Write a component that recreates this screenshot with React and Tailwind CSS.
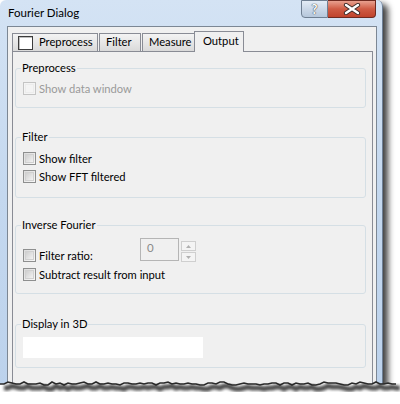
import React from 'react';

const font = "font-['Lato','Segoe_UI',sans-serif]";

// deterministic jagged edge for the torn bottom of the screenshot
const tornPoints = () => {
  const pts = [];
  let seed = 7;
  for (let x = 0; x <= 396; x += 4) {
    seed = (seed * 9301 + 49297) % 233280;
    const r = seed / 233280;
    pts.push([x, 8 + Math.round(r * 4) - (r > 0.85 ? 2 : 0)]);
  }
  return pts;
};

const CheckBox = ({ disabled }) => (
  <div
    className={`shrink-0 w-[13px] h-[13px] border ${
      disabled ? 'border-[#c4c4c4] bg-[#f4f4f4]' : 'border-[#8e8f8f] bg-gradient-to-br from-[#dcdcdc] to-[#f8f8f8]'
    } p-[1px]`}
  >
    <div className={`w-full h-full border ${disabled ? 'border-[#ececec]' : 'border-[#d0d0d0] bg-gradient-to-br from-[#cfcfcf] to-[#f2f2f2]'}`} />
  </div>
);

const CheckRow = ({ label, disabled }) => (
  <div className="flex items-center gap-[3px] h-[13px]">
    <CheckBox disabled={disabled} />
    <span className={`text-[11.2px] leading-[15px] ${disabled ? 'text-[#9a9a9a]' : 'text-black'}`}>{label}</span>
  </div>
);

const Group = ({ title, className, children }) => (
  <div className={`relative w-[351px] ml-[2px] border border-[#d5dfe5] rounded-[3px] ${className}`}>
    <span className="absolute -top-[9px] left-[5px] px-[1px] bg-[#f0f0f0] text-[11.2px] leading-[16px] text-black">
      {title}
    </span>
    {children}
  </div>
);

const Tab = ({ children, className }) => (
  <div
    className={`h-[18px] mt-[2px] flex items-center border border-b-0 border-[#898c95] bg-gradient-to-b from-[#f3f3f3] to-[#dadada] text-[11.2px] ${className}`}
  >
    {children}
  </div>
);

export default function App() {
  const pts = tornPoints();
  const line = pts.map((p, i) => `${i ? 'L' : 'M'}${p[0]} ${p[1]}`).join(' ');
  const fill = `${line} L396 30 L0 30 Z`;

  return (
    <div className={`relative w-[400px] h-[404px] bg-white overflow-hidden ${font}`}>
      {/* window frame */}
      <div className="relative w-[383px] h-[392px] rounded-t-[6px] bg-gradient-to-b from-[#d4e3f4] via-[#c4d8ef] to-[#bcd2ec] border-r border-[#6d7f95] shadow-[5px_4px_6px_rgba(0,0,0,0.75)]">
        {/* title bar */}
        <div className="h-[26px] flex items-center pl-[8px] pb-[1px]">
          <span className="text-[11.5px] text-black">Fourier Dialog</span>
        </div>
        <div className="absolute top-0 right-[6px] flex">
          <div className="w-[27px] h-[18px] border border-[#6f7f92] rounded-bl-[4px] bg-gradient-to-b from-[#e4ecf6] via-[#cbd8e8] to-[#b6c7db] flex items-center justify-center">
            <span className="text-[13px] leading-none font-bold text-white [text-shadow:0_0_1px_#333,0_0_1px_#333]">?</span>
          </div>
          <div className="w-[48px] h-[18px] border border-l-0 border-[#6f2a20] rounded-br-[4px] bg-gradient-to-b from-[#e8a08f] via-[#cf5b44] to-[#c0432c] flex items-center justify-center">
            <svg width="18" height="12" viewBox="0 0 18 12">
              <path d="M3 2 L15 10 M15 2 L3 10" stroke="#3a2a28" strokeWidth="4.2" strokeLinecap="round" />
              <path d="M3 2 L15 10 M15 2 L3 10" stroke="#ffffff" strokeWidth="2.4" strokeLinecap="round" />
            </svg>
          </div>
        </div>

        {/* client area */}
        <div className="ml-[7px] w-[370px] h-[366px] bg-[#f0f0f0] border border-[#7c8794] pl-[4px] pt-[3px]">
          {/* tab strip */}
          <div className="flex h-[21px] items-end">
            <Tab className="w-[86px] pl-[5px] gap-[6px]">
              <div className="shrink-0 w-[15px] h-[14px] border border-[#3c3c3c] bg-white shadow-[inset_1px_1px_0_#c0c0c0]" />
              <span>Preprocess</span>
            </Tab>
            <Tab className="w-[42px] ml-[1px] pl-[6px]">Filter</Tab>
            <Tab className="w-[53px] ml-[1px] pl-[6px]">Measure</Tab>
            <div className="w-[50px] h-[21px] -ml-[1px] border border-b-0 border-[#898c95] bg-[#f0f0f0] flex items-center pl-[8px] text-[11.2px] relative z-10 -mb-[1px] pb-[1px]">
              Output
            </div>
          </div>
          {/* tab panel */}
          <div className="w-[361px] h-[340px] border border-[#898c95] bg-[#f0f0f0] pt-[16px]">
            <Group title="Preprocess" className="h-[40px] pt-[13px] pl-[7px]">
              <CheckRow label="Show data window" disabled />
            </Group>

            <Group title="Filter" className="mt-[29px] h-[61px] pt-[14px] pl-[7px]">
              <div className="flex flex-col gap-[5px]">
                <CheckRow label="Show filter" />
                <CheckRow label="Show FFT filtered" />
              </div>
            </Group>

            <Group title="Inverse Fourier" className="mt-[27px] h-[69px] pl-[7px]">
              <div className="flex items-start">
                <div className="flex flex-col gap-[6px] pt-[23px]">
                  <CheckRow label="Filter ratio:" />
                  <CheckRow label="Subtract result from input" />
                </div>
                <div className="absolute left-[124px] top-[12px] flex items-start gap-[2px]">
                  <div className="w-[39px] h-[23px] border border-[#b5b5b5] bg-[#f0f0f0] pl-[6px] text-[11.5px] leading-[18px] text-[#8a8a8a]">
                    0
                  </div>
                  <div className="flex flex-col gap-[1px] mt-[3px]">
                    <div className="w-[15px] h-[10px] border border-[#cfcfcf] bg-[#f4f4f4] flex items-center justify-center">
                      <svg width="5" height="3" viewBox="0 0 5 3"><path d="M0 3 L2.5 0 L5 3 Z" fill="#b0b0b0" /></svg>
                    </div>
                    <div className="w-[15px] h-[10px] border border-[#cfcfcf] bg-[#f4f4f4] flex items-center justify-center">
                      <svg width="5" height="3" viewBox="0 0 5 3"><path d="M0 0 L5 0 L2.5 3 Z" fill="#b0b0b0" /></svg>
                    </div>
                  </div>
                </div>
              </div>
            </Group>

            <Group title="Display in 3D" className="mt-[30px] h-[44px] pt-[12px] pl-[7px]">
              <div className="w-[180px] h-[21px] bg-white" />
            </Group>
          </div>
        </div>
      </div>

      {/* torn bottom edge */}
      <svg className="absolute left-0 top-[374px]" width="400" height="30" viewBox="0 0 400 30">
        <defs>
          <filter id="blur" x="-5%" y="-100%" width="110%" height="300%">
            <feGaussianBlur stdDeviation="1.8" />
          </filter>
        </defs>
        <path d={fill} fill="#ffffff" />
        <path d={line} transform="translate(4 4)" stroke="#4a4a4a" strokeWidth="5" fill="none" filter="url(#blur)" />
        <path d={line} stroke="#2a2a2a" strokeWidth="1.6" fill="none" />
      </svg>
    </div>
  );
}
